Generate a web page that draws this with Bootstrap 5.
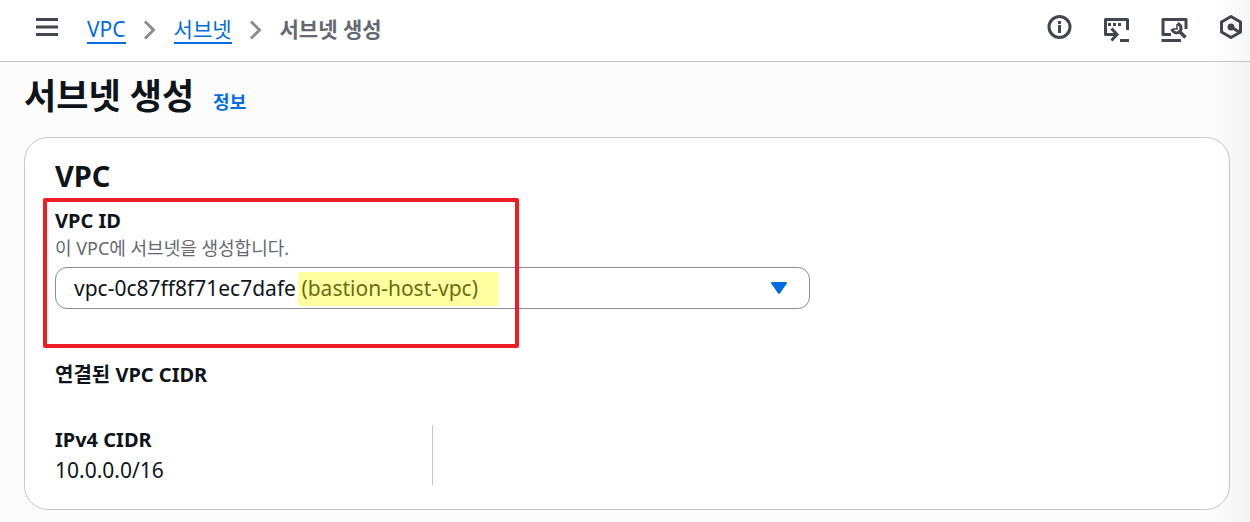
<!DOCTYPE html>
<html lang="ko">
<head>
<meta charset="utf-8">
<meta name="viewport" content="width=device-width, initial-scale=1">
<title>서브넷 생성 | VPC</title>
<link rel="stylesheet" href="https://cdn.jsdelivr.net/npm/bootstrap@5.3.0/dist/css/bootstrap.min.css">
<style>
  :root { --ink: #0f141a; --muted: #656871; --link: #006ce0; --line: #c6c6cd; --icon: #424650; }
  body { font-family: "Noto Sans", "Noto Sans CJK KR", sans-serif; font-size: 21px; line-height: 30px; color: var(--ink); background: #fcfcfd; }
  .topbar { height: 62px; border-bottom: 1px solid var(--line); background: #fff; padding: 0 6px 8px 36px; }
  .icon-btn { border: 0; background: none; padding: 0; color: var(--icon); display: flex; }
  .icon-btn svg, .crumbs svg { display: block; }
  .crumbs { margin: 6px 0 0 29px; gap: 17px; line-height: 26px; }
  .crumbs a { color: var(--link); text-decoration: none; border-bottom: 2px solid var(--link); }
  .crumbs .here { color: var(--muted); font-weight: 700; padding-bottom: 2px; }
  .tools { gap: 30px; }
  .tools .low { padding-top: 4px; }
  main { padding: 10px 20px 12px 24px; }
  .page-heading { gap: 19px; }
  .page-title { font-size: 35px; line-height: 48px; font-weight: 700; margin: 0; }
  .info-link { font-size: 18px; font-weight: 700; color: var(--link); text-decoration: none; }
  .panel { margin-top: 17px; border: 1px solid var(--line); border-radius: 24px; background: #fff; padding: 19px 30px 24px; }
  .panel h2 { font-size: 29px; line-height: 38px; font-weight: 700; margin: 0; }
  .strong-label { font-weight: 700; display: block; margin: 0; font-size: 20px; line-height: 30px; }
  .vpc-field { margin-top: 11px; }
  .hint { font-size: 18px; line-height: 24px; color: var(--muted); }
  .picker { width: 66%; margin-top: 7px; }
  .picker .form-select { height: 42px; padding: 0 56px 0 18px; border: 1px solid #8c8c94; border-radius: 12px; color: var(--ink); font-size: 21px; line-height: 30px; background: #fff; }
  .caret { position: absolute; right: 22px; top: 14px; pointer-events: none; }
  .marker { position: absolute; left: 243px; top: 5px; width: 201px; height: 34px; background: rgba(255, 255, 0, .37); pointer-events: none; }
  .callout-frame { position: absolute; left: -12px; top: -8px; width: 476px; height: 150px; border: 4px solid #ee1c25; border-radius: 2px; pointer-events: none; }
  .cidr-title { margin-top: 51px; }
  .cidr-grid { display: grid; grid-template-columns: repeat(3, 1fr); gap: 28px; margin: 35px 0 0; }
  .cidr-grid dt { font-size: 20px; }
  .cidr-grid .divided { border-left: 1px solid var(--line); margin-left: -14px; }
  .edge-shade { position: fixed; top: 0; right: 0; bottom: 0; width: 40px; background: linear-gradient(to right, rgba(0,0,0,0), rgba(0,0,0,.03)); pointer-events: none; }
</style>
<script src="https://cdn.jsdelivr.net/npm/bootstrap@5.3.0/dist/js/bootstrap.bundle.min.js"></script>
</head>
<body>
<header class="topbar d-flex align-items-center">
  <button class="icon-btn" type="button" aria-label="메뉴">
    <svg width="22" height="20" viewBox="0 0 22 20" stroke="currentColor" stroke-width="3"><path d="M0 2.500H22M0 10H22M0 17.500H22"/></svg>
  </button>
  <nav class="crumbs d-flex align-items-center" aria-label="탐색 경로">
    <a href="#">VPC</a>
    <svg width="14" height="20" viewBox="0 0 14 20" fill="none" stroke="#8c8c94" stroke-width="3"><path d="M2 1.500 10.500 10 2 18.500"/></svg>
    <a href="#">서브넷</a>
    <svg width="14" height="20" viewBox="0 0 14 20" fill="none" stroke="#8c8c94" stroke-width="3"><path d="M2 1.500 10.500 10 2 18.500"/></svg>
    <span class="here" aria-current="page">서브넷 생성</span>
  </nav>
  <div class="tools d-flex align-items-center ms-auto">
    <button class="icon-btn" type="button" aria-label="정보">
      <svg width="26" height="26" viewBox="0 0 26 26" fill="none" stroke="currentColor"><circle cx="13.500" cy="13" r="10.500" stroke-width="3"/><path d="M13.500 7V10M12 12.500H13.500V19" stroke-width="3"/></svg>
    </button>
    <button class="icon-btn low" type="button" aria-label="CloudShell">
      <svg width="28" height="28" viewBox="0 0 28 28" fill="none" stroke="currentColor" stroke-width="3"><path d="M25.500 15V4.500H3.500V19.500H14" stroke-linejoin="round"/><path d="M9.500 13.500 15 19.500 9.500 25.500"/><path d="M18 25.500H27"/><path d="M6 9.500H9M11 9.500H14M16 9.500H19"/></svg>
    </button>
    <button class="icon-btn low" type="button" aria-label="도구">
      <svg width="28" height="28" viewBox="0 0 28 28" fill="none" stroke="currentColor" stroke-width="3"><path d="M26 14V4.500H3V19.500H11" stroke-linejoin="round"/><path d="M1.500 25.500H21"/><path d="M17.500 8.500C21.500 10 22 14.500 19.500 16.500 17 19 13 18 12 14"/><path d="M17 9V14H12.500" stroke-width="1.500"/><path d="M19 16 25.500 22.500" stroke-width="3.500"/></svg>
    </button>
    <button class="icon-btn" type="button" aria-label="Amazon Q">
      <svg width="26" height="26" viewBox="0 0 26 26" fill="none" stroke="currentColor" stroke-width="3" stroke-linejoin="round"><path d="M13 2.500 22.500 8V18L13 23.500 3.500 18V8Z"/><path d="M13 13 22 18.500"/><circle cx="13" cy="13" r="3.500" fill="currentColor" stroke="none"/></svg>
    </button>
  </div>
</header>

<main>
  <div class="page-heading d-flex align-items-baseline">
    <h1 class="page-title">서브넷 생성</h1>
    <a class="info-link" href="#">정보</a>
  </div>

  <section class="panel">
    <h2>VPC</h2>
    <div class="vpc-field position-relative">
      <label class="strong-label" for="vpc-id">VPC ID</label>
      <div class="hint" id="vpc-hint">이 VPC에 서브넷을 생성합니다.</div>
      <div class="picker position-relative">
        <select class="form-select" id="vpc-id" aria-describedby="vpc-hint">
          <option selected>vpc-0c87ff8f71ec7dafe (bastion-host-vpc)</option>
        </select>
        <svg class="caret" width="18" height="14" viewBox="0 0 18 14"><path d="M2 2H16L9 12Z" fill="#006ce0" stroke="#006ce0" stroke-width="2" stroke-linejoin="round"/></svg>
        <span class="marker"></span>
      </div>
      <span class="callout-frame"></span>
    </div>
    <h3 class="strong-label cidr-title">연결된 VPC CIDR</h3>
    <dl class="cidr-grid">
      <div>
        <dt>IPv4 CIDR</dt>
        <dd class="m-0">10.0.0.0/16</dd>
      </div>
      <div class="divided"></div>
    </dl>
  </section>
</main>
<div class="edge-shade"></div>
</body>
</html>
